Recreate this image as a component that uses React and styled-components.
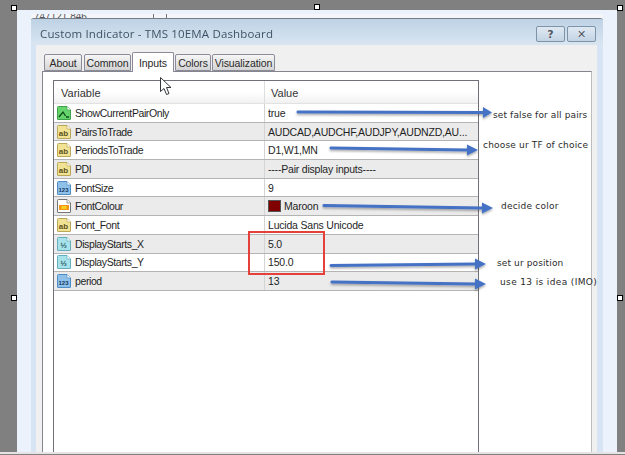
import React from "react";
import styled, { createGlobalStyle } from "styled-components";

const Global = createGlobalStyle`
  html, body { margin: 0; padding: 0; background: #808080; }
  * { box-sizing: border-box; }
`;

const Page = styled.div`
  position: relative;
  width: 625px;
  height: 455px;
  overflow: hidden;
  background: #808080;
  padding-top: 10px;
  font-family: "Liberation Sans", Arial, sans-serif;
`;

const Sheet = styled.div`
  margin: 0 8px 0 17px;
  height: 442px;
  padding: 4px 14px 0;
  background: #ecf2fb;
  display: flex;
  flex-direction: column;
`;

const Shelf = styled.div`
  height: 1px;
  background: #e4e4e4;
  box-shadow: 0 1px 0 #e4e4e4;
`;

const Behind = styled.div`
  height: 4px;
  overflow: hidden;
  display: flex;
  padding-left: 3px;
  font-size: 10px;
  line-height: 6px;
  color: #555;
  background: #f4f6fa;
`;

const BehindTick = styled.span`
  width: 1px;
  height: 4px;
  margin-left: ${({ $x }) => $x}px;
  background: #777;
`;

const Window = styled.div`
  flex: 1;
  min-height: 0;
  display: flex;
  flex-direction: column;
  background: #d6e4f4;
  border-top: 1px solid #767f88;
  border-radius: 3px 3px 0 0;
  padding: 0 6px 0 5px;
`;

const TitleBar = styled.div`
  height: 26px;
  margin: 0 -6px 0 -5px;
  padding: 2px 7px 0 9px;
  display: flex;
  align-items: center;
  justify-content: space-between;
  background: linear-gradient(#bed2e5, #d9e6f2);
  border-radius: 3px 3px 0 0;
`;

const Title = styled.div`
  font-family: "Open Sans", "Liberation Sans", sans-serif;
  font-size: 11.5px;
  color: #3f5364;
  letter-spacing: 0.15px;
  filter: blur(0.3px);
`;

const Controls = styled.div`
  display: flex;
  gap: 2px;
  margin-top: 2px;
`;

const Control = styled.div`
  width: 29px;
  height: 16px;
  display: flex;
  align-items: center;
  justify-content: center;
  border: 1px solid #7e93a8;
  border-radius: 2px;
  background: linear-gradient(#dfe9f3, #c3d4e4);
  font-family: "DejaVu Sans", sans-serif;
  font-weight: 700;
  font-size: 11px;
  color: #4c5560;
  text-shadow: 0 0 1px #fff;
`;

const Body = styled.div`
  flex: 1;
  min-height: 0;
  display: flex;
  flex-direction: column;
  background: #f0f0f0;
  padding: 6px 5px 0 6px;
`;

const Tabs = styled.div`
  height: 20px;
  display: flex;
  align-items: flex-end;
  padding-left: 2px;
  position: relative;
  z-index: 1;
`;

const Tab = styled.div`
  width: ${({ $w }) => $w}px;
  margin-right: ${({ $gap }) => $gap}px;
  height: ${({ $active }) => ($active ? 20 : 17)}px;
  margin-bottom: ${({ $active }) => ($active ? -1 : 0)}px;
  display: flex;
  align-items: center;
  justify-content: center;
  font-size: 10.5px;
  letter-spacing: -0.1px;
  color: #2a2a2a;
  border: 1px solid #8b8b9a;
  border-bottom: ${({ $active }) => ($active ? "none" : "1px solid #8b8b9a")};
  border-radius: 2px 2px 0 0;
  background: ${({ $active }) => ($active ? "#fff" : "linear-gradient(#f6f6f6, #d4d4d4)")};
`;

const Panel = styled.div`
  flex: 1;
  min-height: 0;
  background: #fff;
  border: 1px solid #85858f;
  border-right-color: #bdbdbd;
  border-bottom: none;
  padding: 8px 0 0 10px;
`;

const Grid = styled.div`
  width: 426px;
  height: 100%;
  border: 1px solid #6f7079;
  border-bottom: none;
  display: flex;
  flex-direction: column;
`;

const Head = styled.div`
  height: 23px;
  display: grid;
  grid-template-columns: 211px 1fr;
  background: linear-gradient(#fff 50%, #f1f1f1);
  border-bottom: 1px solid #e2e2e2;
  font-size: 11px;
  color: #333;
`;

const HeadCell = styled.div`
  display: flex;
  align-items: center;
  padding: 2px 0 0 ${({ $pad }) => $pad}px;
  border-right: ${({ $line }) => ($line ? "1px solid #dedede" : "none")};
`;

const Row = styled.div`
  height: 18.7px;
  display: grid;
  grid-template-columns: 211px 1fr;
  background: ${({ $shade }) => ($shade ? "#ebebeb" : "#fff")};
  border-bottom: 1px solid #b4b4b4;
  font-size: 10.5px;
  color: #1f1f1f;
`;

const NameCell = styled.div`
  display: flex;
  align-items: center;
  gap: 3px;
  padding-left: 2px;
  letter-spacing: -0.4px;
  border-right: 1px solid #d4d4d4;
`;

const ValueCell = styled.div`
  display: flex;
  align-items: center;
  gap: 3px;
  padding-left: 3px;
  letter-spacing: -0.2px;
  white-space: nowrap;
`;

const Swatch = styled.span`
  width: 13px;
  height: 12px;
  background: #800000;
  border: 1px solid #555;
`;

const RedBox = styled.div`
  position: absolute;
  left: 248px;
  top: 231px;
  width: 77px;
  height: 44px;
  border: 2px solid #e5403a;
`;

const Note = styled.div`
  position: absolute;
  left: ${({ $x }) => $x}px;
  top: ${({ $y }) => $y}px;
  font-family: "DejaVu Sans", sans-serif;
  font-size: 9px;
  line-height: 12px;
  letter-spacing: ${({ $s }) => $s}px;
  color: #2b2b2b;
  white-space: nowrap;
`;

const Handle = styled.div`
  position: absolute;
  left: ${({ $x }) => $x}px;
  top: ${({ $y }) => $y}px;
  width: 6px;
  height: 6px;
  background: #fff;
  border: 1px solid #000;
`;

const Overlay = styled.svg`
  position: absolute;
  left: 0;
  top: 0;
`;

const Doc = ({ fill, edge, children }) => (
  <svg width="16" height="16" viewBox="0 0 16 16">
    <path d="M1.5 2.5q0-1 1-1h8.500l3.500 3.500v9q0 .5-.5.5h-12q-.5 0-.5-.5z" fill={fill} stroke={edge} />
    <path d="M11 1.500v3.500h3.500" fill="#fff" stroke={edge} strokeWidth="0.7" />
    {children}
  </svg>
);

const Label = ({ children, size = 6.5, color }) => (
  <text x="7.5" y="12" textAnchor="middle" fontSize={size} fontWeight="700" fontFamily="Liberation Sans" letterSpacing="0" fill={color}>
    {children}
  </text>
);

const icons = {
  bool: (
    <Doc fill="#66d46c" edge="#3fa24a">
      <path d="M3 12l4-5 2.500 4 M10 12h3" fill="none" stroke="#0b4a17" strokeWidth="1.300" />
    </Doc>
  ),
  str: (
    <Doc fill="#f2e394" edge="#bba75a">
      <Label size={8} color="#5c5220">ab</Label>
    </Doc>
  ),
  int: (
    <Doc fill="#8fc0ea" edge="#4f8cc4">
      <Label size={6} color="#12395f">123</Label>
    </Doc>
  ),
  dbl: (
    <Doc fill="#a8e2ea" edge="#62aebd">
      <Label size={8} color="#1d5a66">½</Label>
    </Doc>
  ),
  color: (
    <Doc fill="#fff" edge="#777">
      <rect x="3" y="7" width="10" height="5" fill="#f7941d" />
      <rect x="5.500" y="8" width="5" height="3" fill="#f5d020" />
    </Doc>
  ),
};

const rows = [
  ["bool", "ShowCurrentPairOnly", "true"],
  ["str", "PairsToTrade", "AUDCAD,AUDCHF,AUDJPY,AUDNZD,AU..."],
  ["str", "PeriodsToTrade", "D1,W1,MN"],
  ["str", "PDI", "----Pair display inputs----"],
  ["int", "FontSize", "9"],
  ["color", "FontColour", "Maroon"],
  ["str", "Font_Font", "Lucida Sans Unicode"],
  ["dbl", "DisplayStarts_X", "5.0"],
  ["dbl", "DisplayStarts_Y", "150.0"],
  ["int", "period", "13"],
];

const tabs = [
  ["About", 38, 2],
  ["Common", 47, 1],
  ["Inputs", 42, 1],
  ["Colors", 36, 1],
  ["Visualization", 63, 0],
];

const arrows = [
  [298, 112, 483, 112.5, 492],
  [331, 148, 467, 150, 478],
  [324, 205.5, 482, 208, 493],
  [331, 265.5, 475, 264, 486],
  [332, 282, 475, 284, 486],
];

const notes = [
  ["set false for all pairs", 493, 109, 0.12],
  ["choose ur TF of choice", 483, 139, 0.18],
  ["decide color", 501, 200, 0.22],
  ["set ur position", 497, 257, 0.12],
  ["use 13 is idea (IMO)", 500, 276, 0.37],
];

const handles = [
  [11, 5],
  [314, 4],
  [617, 5],
  [11, 295],
  [617, 295],
];

export default function App() {
  return (
    <Page>
      <Global />
      <Sheet>
        <Behind>
          <span>747121 846</span>
          <BehindTick $x={66} />
          <BehindTick $x={12} />
        </Behind>
        <Window>
          <TitleBar>
            <Title>Custom Indicator - TMS 10EMA Dashboard</Title>
            <Controls>
              <Control>?</Control>
              <Control>✕</Control>
            </Controls>
          </TitleBar>
          <Body>
            <Tabs>
              {tabs.map(([name, w, gap]) => (
                <Tab key={name} $w={w} $gap={gap} $active={name === "Inputs"}>
                  {name}
                </Tab>
              ))}
            </Tabs>
            <Panel>
              <Grid>
                <Head>
                  <HeadCell $pad={7} $line>Variable</HeadCell>
                  <HeadCell $pad={6}>Value</HeadCell>
                </Head>
                {rows.map(([icon, name, value], i) => (
                  <Row key={name} $shade={i % 2 === 1}>
                    <NameCell>
                      {icons[icon]}
                      {name}
                    </NameCell>
                    <ValueCell>
                      {icon === "color" && <Swatch />}
                      {value}
                    </ValueCell>
                  </Row>
                ))}
              </Grid>
            </Panel>
          </Body>
        </Window>
      </Sheet>
      <Shelf />
      <RedBox />
      <Overlay width="625" height="455" viewBox="0 0 625 455">
        <defs>
          <filter id="arrowShadow" x="-5%" y="-100%" width="110%" height="300%">
            <feDropShadow dx="0" dy="1.500" stdDeviation="1" floodColor="#000" floodOpacity="0.35" />
          </filter>
        </defs>
        {arrows.map(([x1, y1, x2, y2, tip]) => (
          <g key={x1 + "-" + y1} filter="url(#arrowShadow)" fill="#4472c4">
            <path d={`M${x1} ${y1}L${x2} ${y2}`} stroke="#4472c4" strokeWidth="3" strokeLinecap="round" />
            <path d={`M${x2} ${y2 - 5.5}L${tip} ${y2}L${x2} ${y2 + 5.5}z`} />
          </g>
        ))}
        <path
          d="M160.500 77.500v14l3.500-3 2.500 6 2.500-1-2.500-6h4.500z"
          fill="#fff"
          stroke="#33363a"
          strokeWidth="1"
        />
      </Overlay>
      {notes.map(([text, x, y, s]) => (
        <Note key={text} $x={x} $y={y} $s={s}>
          {text}
        </Note>
      ))}
      {handles.map(([x, y]) => (
        <Handle key={x + "-" + y} $x={x} $y={y} />
      ))}
    </Page>
  );
}
